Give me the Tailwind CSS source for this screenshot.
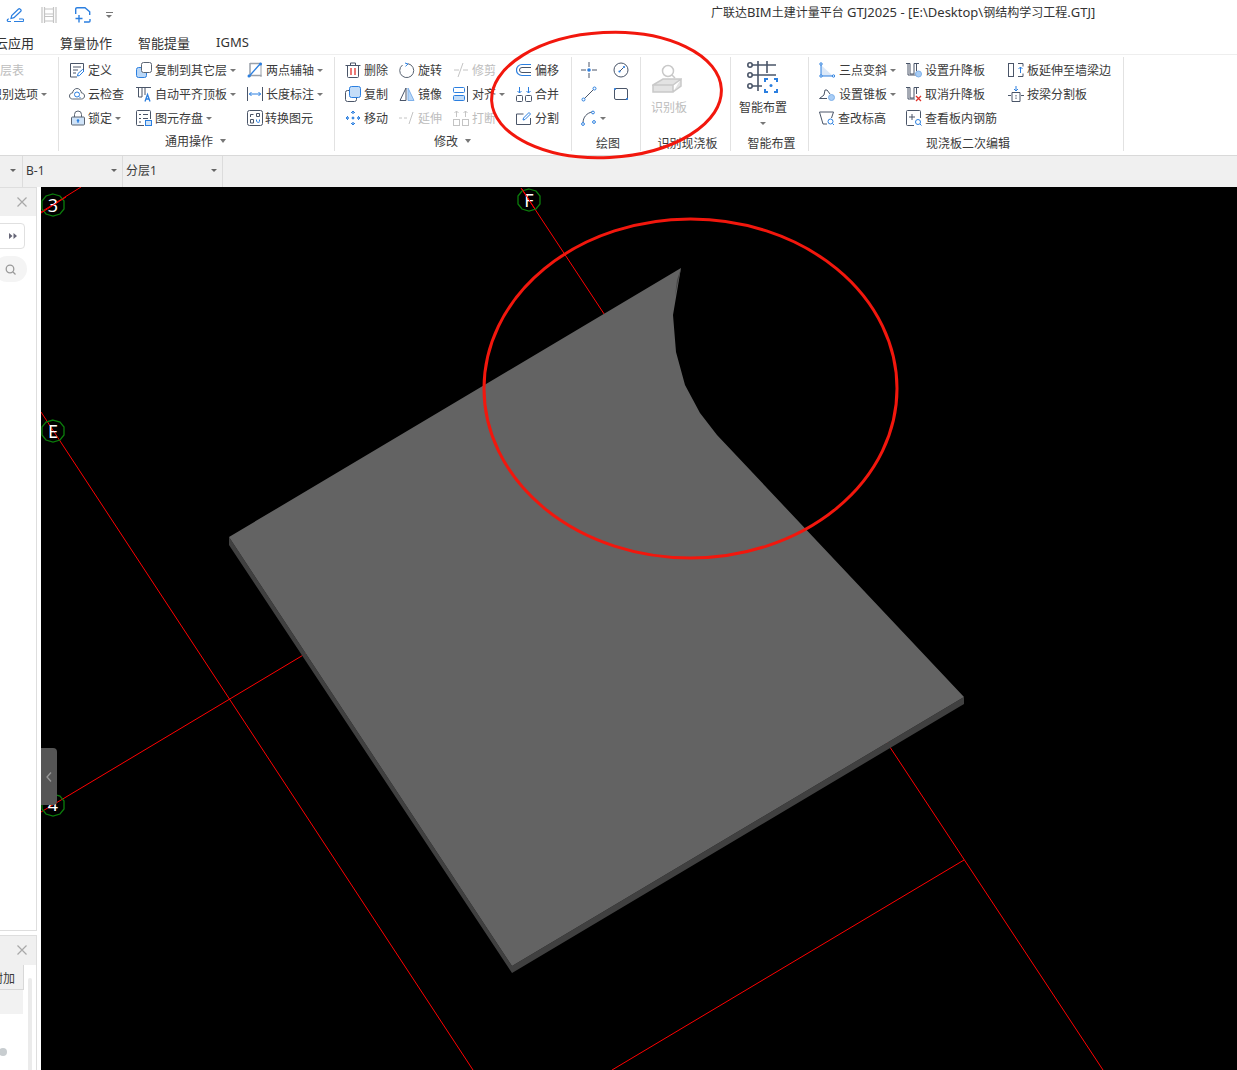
<!DOCTYPE html>
<html lang="zh">
<head>
<meta charset="utf-8">
<script src="https://cdn.jsdelivr.net/npm/@tailwindcss/browser@4"></script>
<title>GTJ2025</title>
</head>
<body class="relative w-[1237px] h-[1070px] overflow-hidden bg-white text-xs text-[#3a3a3a] font-[Noto_Sans_CJK_SC,sans-serif]">

<!-- title bar -->
<header class="relative h-[30px] flex items-center">
  <svg class="ml-[6px] w-[18px] h-[18px]" viewBox="0 0 18 18" fill="none" stroke="#2b7fe0" stroke-width="1.200"><path d="M5 15.500H2.500a1 1 0 0 1 0-2.500H3M8 15.500h8.500a1 1 0 0 0 0-2.500H13"/><path d="M5 12.500l.7-3 6.800-6.500a1 1 0 0 1 1.500 0l.8.800a1 1 0 0 1 0 1.500L8 11.700z"/></svg>
  <svg class="ml-[17px] w-[16px] h-[16px]" viewBox="0 0 16 16" fill="none" stroke="#c4c4c4" stroke-width="1.200"><path d="M1 0v16M3.500 0v16M12.500 0v16M15 0v16M3.500 2h9M3.500 7h9M3.500 9.500h9M3.500 14h9"/></svg>
  <svg class="ml-[18px] w-[16px] h-[16px]" viewBox="0 0 16 16" fill="none" stroke="#2b7fe0" stroke-width="1.400"><path d="M.7 7V2a1.300 1.300 0 0 1 1.300-1.300h8l4.700 4V8M9 15h5a1 1 0 0 0 1-1v-2M.5 11.500h7M4 8v7.500"/></svg>
  <span class="ml-[15px] flex flex-col gap-[2px]"><i class="block w-[7px] h-[1px] bg-[#777]"></i><i class="block w-0 h-0 border-x-[3.500px] border-t-[3.500px] border-x-transparent border-t-[#777]"></i></span>
  <span class="absolute left-[711px] top-[3px] leading-[18px] whitespace-nowrap text-[#333]">广联达<span class="font-[Noto_Sans,sans-serif] text-[13px]">BIM</span>土建计量平台<span class="font-[Noto_Sans,sans-serif] text-[13px]"> GTJ2025 - [E:\Desktop\</span>钢结构学习工程<span class="font-[Noto_Sans,sans-serif] text-[13px]">.GTJ]</span></span>
</header>

<!-- tabs -->
<nav class="h-[25px] pt-[2px] border-b border-[#eeeeee] flex items-center text-[13px] text-[#333] -ml-[5px] gap-[26px]">
  <span>云应用</span><span>算量协作</span><span>智能提量</span><span class="font-[Noto_Sans,sans-serif]">IGMS</span>
</nav>

<!-- ribbon -->
<section class="h-[101px] bg-white border-b border-[#d9d9d9] pt-[2px] flex items-start whitespace-nowrap">

  <div class="w-[59px] h-[94px] border-r border-[#e2e2e2] pt-[1px] overflow-hidden relative">
    <div class="h-6 flex items-center -ml-[12px] text-[#bdbdbd]">楼层表</div>
    <div class="h-6 flex items-center -ml-[10px]">识别选项<i class="ml-[3px] w-0 h-0 border-x-[3px] border-t-[3px] border-x-transparent border-t-[#777]"></i></div>
  </div>

  <!-- common -->
  <div class="w-[276px] h-[94px] border-r border-[#e2e2e2] pt-[1px] flex flex-col">
    <div class="flex pl-[10px]">
      <div class="w-[67px]">
        <div class="h-6 flex items-center gap-[3px]"><svg class="w-4 h-4" viewBox="0 0 16 16" fill="none" stroke="#4a5568"><path d="M8 15H1.500V1.500h13V8M4 5h8M4 8h5M4 11h3"/><path d="M8.500 14l.5-2.500 4.500-4 1.500 1.500-4.500 4.500z" stroke="#2b7fe0"/></svg><span>定义</span></div>
        <div class="h-6 flex items-center gap-[3px]"><svg class="w-4 h-4" viewBox="0 0 16 16" fill="none" stroke="#5a6472"><path d="M4 13H3.500C1.500 13 .5 11.500 .5 10s1-3 3-3C4 4 6 2.500 8 2.500S12 4 12.500 7c2 0 3 1.500 3 3s-1 3-3 3H4z"/><circle cx="8" cy="8.500" r="2.500" stroke="#2b7fe0"/><path d="M10 10.500l1.500 1.500" stroke="#2b7fe0"/></svg><span>云检查</span></div>
        <div class="h-6 flex items-center gap-[3px] pl-[2px]"><svg class="w-[14px] h-4" viewBox="0 0 14 16" fill="none" stroke="#5a6472"><path d="M3.500 7V4.500a3.500 3.500 0 0 1 7 0V7"/><rect x=".5" y="7" width="13" height="8" rx="1" fill="#cfe3f8"/><circle cx="7" cy="10.500" r="1.300" fill="#2b7fe0" stroke="none"/><path d="M7 11v2" stroke="#2b7fe0"/></svg><span class="flex items-center">锁定<i class="ml-[3px] w-0 h-0 border-x-[3px] border-t-[3px] border-x-transparent border-t-[#777]"></i></span></div>
      </div>
      <div class="w-[111px]">
        <div class="h-6 flex items-center gap-[3px]"><svg class="w-4 h-4" viewBox="0 0 16 16" fill="none"><rect x=".5" y="5.500" width="10" height="10" rx="2" fill="#b9d7f7" stroke="#2b7fe0"/><rect x="5.500" y=".5" width="10" height="10" rx="2" fill="#fff" stroke="#5a6472"/></svg><span class="flex items-center">复制到其它层<i class="ml-[3px] w-0 h-0 border-x-[3px] border-t-[3px] border-x-transparent border-t-[#777]"></i></span></div>
        <div class="h-6 flex items-center gap-[3px]"><svg class="w-4 h-4" viewBox="0 0 16 16" fill="none" stroke="#4a5568"><path d="M0 1.500h15M2.500 2v9h3.500V2M9 2v7"/><path d="M9 15.500l2.500-7 2.500 7M10 13h3" stroke="#2b7fe0" stroke-width="1.300"/></svg><span class="flex items-center">自动平齐顶板<i class="ml-[3px] w-0 h-0 border-x-[3px] border-t-[3px] border-x-transparent border-t-[#777]"></i></span></div>
        <div class="h-6 flex items-center gap-[3px]"><svg class="w-4 h-4" viewBox="0 0 16 16" fill="none" stroke="#4a5568"><path d="M8 15.500H1.500a1 1 0 0 1-1-1v-13a1 1 0 0 1 1-1h12a1 1 0 0 1 1 1V9"/><path d="M3 4.500h2M7 4.500h5M3 8.500h2M7 8.500h5M3 12h2"/><rect x="9.500" y="10.500" width="6" height="5" fill="#cfe3f8" stroke="#2b7fe0"/></svg><span class="flex items-center">图元存盘<i class="ml-[3px] w-0 h-0 border-x-[3px] border-t-[3px] border-x-transparent border-t-[#777]"></i></span></div>
      </div>
      <div>
        <div class="h-6 flex items-center gap-[3px]"><svg class="w-4 h-4" viewBox="0 0 16 16" fill="none"><path d="M3 1.500h11.500M3 1v14M1 13.500h13.500" stroke="#9aa1aa" stroke-width="1.500"/><path d="M14 1v14" stroke="#9aa1aa"/><path d="M2 14.500L13.500 1.500" stroke="#2b7fe0" stroke-width="1.300"/><circle cx="2" cy="14" r="1.500" fill="#2b7fe0"/><circle cx="13.500" cy="2" r="1.500" fill="#2b7fe0"/></svg><span class="flex items-center">两点辅轴<i class="ml-[3px] w-0 h-0 border-x-[3px] border-t-[3px] border-x-transparent border-t-[#777]"></i></span></div>
        <div class="h-6 flex items-center gap-[3px]"><svg class="w-4 h-4" viewBox="0 0 16 16" fill="none" stroke="#4a5568"><path d="M.5 1v14M15.500 1v14"/><path d="M2 8h12M4.500 6L2.500 8l2 2M11.500 6l2 2-2 2" stroke="#2b7fe0"/></svg><span class="flex items-center">长度标注<i class="ml-[3px] w-0 h-0 border-x-[3px] border-t-[3px] border-x-transparent border-t-[#777]"></i></span></div>
        <div class="h-6 flex items-center gap-[2px]"><svg class="w-4 h-4" viewBox="0 0 16 16" fill="none" stroke="#4a5568"><rect x=".5" y=".5" width="15" height="15" rx="2"/><path d="M3.500 7V4.500h3M3.500 9.500h3v3.500h-3zM9.500 3.500h3v3h-3z"/><path d="M9.500 9.500v1.500a2 2 0 0 0 3 1M12.500 9.500v2" stroke="#2b7fe0"/></svg><span>转换图元</span></div>
      </div>
    </div>
    <div class="h-[22px] flex items-center justify-center pr-[2px]">通用操作<i class="ml-[7px] w-0 h-0 border-x-[3.500px] border-t-[4px] border-x-transparent border-t-[#777]"></i></div>
  </div>

  <!-- modify -->
  <div class="w-[237px] h-[94px] border-r border-[#e2e2e2] pt-[1px] flex flex-col">
    <div class="flex pl-[10px]">
      <div class="w-[54px]">
        <div class="h-6 flex items-center gap-[3px]"><svg class="w-4 h-4" viewBox="0 0 16 16" fill="none" stroke="#4a5568"><path d="M.5 3.500h15M5.500 3.500V1h5v2.500M2.500 3.500v11a1 1 0 0 0 1 1h9a1 1 0 0 0 1-1v-11"/><path d="M6 6v7M10 6v7" stroke="#e0322b" stroke-width="1.300"/></svg><span>删除</span></div>
        <div class="h-6 flex items-center gap-[3px]"><svg class="w-4 h-4" viewBox="0 0 16 16" fill="none"><rect x=".5" y="4.500" width="11" height="11" rx="2" fill="#fff" stroke="#4a5568"/><rect x="4.500" y=".5" width="11" height="11" rx="2" fill="#c4ddf8" stroke="#2b7fe0"/></svg><span>复制</span></div>
        <div class="h-6 flex items-center gap-[3px]"><svg class="w-4 h-4" viewBox="0 0 16 16" fill="none" stroke="#2b7fe0"><path d="M8 1v3M8 12v3M1 8h3M12 8h3" stroke-width="1.300"/><path d="M6 3l2-2 2 2M6 13l2 2 2-2M3 6L1 8l2 2M13 6l2 2-2 2"/><circle cx="8" cy="8" r="1" fill="#2b7fe0"/></svg><span>移动</span></div>
      </div>
      <div class="w-[54px]">
        <div class="h-6 flex items-center gap-[3px]"><svg class="w-4 h-4" viewBox="0 0 16 16" fill="none" stroke="#5a6472"><path d="M9 1.700A7 7 0 1 1 3.500 3"/><path d="M6 1l3 1-2.500 2.300" stroke="#2b7fe0"/></svg><span>旋转</span></div>
        <div class="h-6 flex items-center gap-[3px]"><svg class="w-4 h-4" viewBox="0 0 16 16" fill="none"><path d="M7 2L1 14.500h6z" fill="#fff" stroke="#4a5568"/><path d="M9 2l6 12.500H9z" fill="#b9d7f7" stroke="#7fb1ea"/></svg><span>镜像</span></div>
        <div class="h-6 flex items-center gap-[3px] text-[#bdbdbd]"><svg class="w-4 h-4" viewBox="0 0 16 16" fill="none" stroke="#c4c4c4"><path d="M0 8h3M5 8h3M10 14l4-12"/></svg><span>延伸</span></div>
      </div>
      <div class="w-[63px]">
        <div class="h-6 flex items-center gap-[3px] text-[#bdbdbd]"><svg class="w-4 h-4" viewBox="0 0 16 16" fill="none" stroke="#c4c4c4"><path d="M1 8h5M10 8h5M5 15L10 1"/></svg><span>修剪</span></div>
        <div class="h-6 flex items-center gap-[3px]"><svg class="w-4 h-4" viewBox="0 0 16 16" fill="none"><rect x=".5" y="1.500" width="11" height="5" rx="1" stroke="#2b7fe0"/><rect x=".5" y="9.500" width="11" height="5" rx="1" fill="#c4ddf8" stroke="#2b7fe0"/><path d="M14.500 0v16" stroke="#4a5568"/></svg><span class="flex items-center">对齐<i class="ml-[3px] w-0 h-0 border-x-[3px] border-t-[3px] border-x-transparent border-t-[#777]"></i></span></div>
        <div class="h-6 flex items-center gap-[3px] text-[#bdbdbd]"><svg class="w-4 h-4" viewBox="0 0 16 16" fill="none" stroke="#c4c4c4"><rect x=".5" y="9.500" width="6" height="6"/><rect x="9.500" y="9.500" width="6" height="6"/><path d="M3.500 1v6M1.500 3l2-2 2 2M12.500 1v6M10.500 3l2-2 2 2"/></svg><span>打断</span></div>
      </div>
      <div>
        <div class="h-6 flex items-center gap-[3px]"><svg class="w-4 h-4" viewBox="0 0 16 16" fill="none"><path d="M15 2.500H6a5.500 5.500 0 0 0 0 11h9" stroke="#2b7fe0" stroke-width="1.200"/><path d="M15 5.500H6a2.500 2.500 0 0 0 0 5h9" stroke="#4a5568"/></svg><span>偏移</span></div>
        <div class="h-6 flex items-center gap-[3px]"><svg class="w-4 h-4" viewBox="0 0 16 16" fill="none" stroke="#4a5568"><rect x=".5" y="9.500" width="6" height="6" rx="1"/><rect x="9.500" y="9.500" width="6" height="6" rx="1"/><path d="M3.500 1v6M1.500 5l2 2 2-2M12.500 1v6M10.500 5l2 2 2-2" stroke="#2b7fe0"/></svg><span>合并</span></div>
        <div class="h-6 flex items-center gap-[3px]"><svg class="w-4 h-4" viewBox="0 0 16 16" fill="none" stroke="#4a5568"><path d="M7.500 4H.5v10.500h14V8"/><path d="M7 10l.5-2L13 2.500 14.500 4 9 9.500z" stroke="#2b7fe0"/></svg><span>分割</span></div>
      </div>
    </div>
    <div class="h-[22px] flex items-center justify-center -ml-[1px]">修改<i class="ml-[7px] w-0 h-0 border-x-[3.500px] border-t-[4px] border-x-transparent border-t-[#777]"></i></div>
  </div>

  <!-- draw -->
  <div class="w-[69px] h-[94px] border-r border-[#e2e2e2] pt-[1px] flex flex-col">
    <div class="flex pl-[9px]">
      <div class="w-[33px]">
        <div class="h-6 flex items-center"><svg class="w-4 h-4" viewBox="0 0 16 16" fill="none" stroke="#4a5568"><path d="M0 8h5M11 8h5M8 0v5M8 11v5"/><circle cx="8" cy="8" r="1.800" fill="#2b7fe0" stroke="none"/></svg></div>
        <div class="h-6 flex items-center"><svg class="w-4 h-4" viewBox="0 0 16 16" fill="none" stroke="#4a5568"><path d="M3 13L13 3"/><circle cx="2.500" cy="13.500" r="1.500" fill="#fff" stroke="#2b7fe0"/><circle cx="13.500" cy="2.500" r="1.500" fill="#fff" stroke="#2b7fe0"/></svg></div>
        <div class="h-6 flex items-center"><svg class="w-4 h-4" viewBox="0 0 16 16" fill="none" stroke="#4a5568"><path d="M2 13C2 7 6 3 11 2"/><circle cx="2" cy="14" r="1.400" fill="#fff" stroke="#2b7fe0"/><circle cx="12" cy="2.500" r="1.400" fill="#fff" stroke="#2b7fe0"/><circle cx="13" cy="12" r="1.400" fill="#fff" stroke="#2b7fe0"/></svg><i class="ml-[3px] w-0 h-0 border-x-[3px] border-t-[3px] border-x-transparent border-t-[#777]"></i></div>
      </div>
      <div class="-ml-[1px]">
        <div class="h-6 flex items-center"><svg class="w-4 h-4" viewBox="0 0 16 16" fill="none" stroke="#4a5568"><circle cx="8" cy="8" r="7"/><path d="M6.500 9.500l4-4"/><circle cx="6.500" cy="9.500" r="1.100" fill="#2b7fe0" stroke="none"/><circle cx="11" cy="5" r="1.100" fill="#2b7fe0" stroke="none"/></svg></div>
        <div class="h-6 flex items-center"><svg class="w-4 h-4" viewBox="0 0 16 16" fill="none" stroke="#4a5568"><rect x="1.500" y="2.500" width="13" height="11" rx="1.500"/><circle cx="2" cy="3" r="1.100" fill="#2b7fe0" stroke="none"/><circle cx="14" cy="13" r="1.100" fill="#2b7fe0" stroke="none"/></svg></div>
      </div>
    </div>
    <div class="h-[22px] shrink-0 mt-[2px] flex items-center justify-center pl-[4px]">绘图</div>
  </div>

  <!-- recognise -->
  <div class="w-[90px] h-[94px] border-r border-[#e2e2e2] flex flex-col">
    <div class="h-[73px] shrink-0 pl-[11px] flex flex-col items-start">
      <svg class="mt-[7px] w-[30px] h-[30px]" viewBox="0 0 30 30" fill="none" stroke="#c9c9c9" stroke-width="1.500"><circle cx="16" cy="7" r="5.500"/><path d="M20 11l3 3"/><path d="M1 21l10-6h18l-8 6zM1 21v7h20v-7M21 28l8-6v-7" fill="#e3e3e3"/></svg>
      <span class="mt-[5px] -ml-[1px] text-[#bdbdbd]">识别板</span>
    </div>
    <div class="h-[22px] shrink-0 mt-[2px] flex items-center justify-center pl-[4px]">识别现浇板</div>
  </div>

  <!-- smart -->
  <div class="w-[78px] h-[94px] border-r border-[#e2e2e2] flex flex-col">
    <div class="h-[73px] shrink-0 w-[64px] flex flex-col items-center">
      <svg class="mt-[3px] w-[32px] h-[34px] shrink-0" viewBox="0 0 32 34" fill="none" stroke="#4a5568" stroke-width="1.600"><path d="M5 5h24M5 15h24M5 26h10M11 1v30M20 1v12"/><circle cx="3" cy="5" r="2.200" fill="#fff"/><circle cx="3" cy="15" r="2.200" fill="#fff"/><circle cx="3" cy="26" r="2.200" fill="#fff"/><path d="M18 22v-3h3M27 19h3v3M30 29v3h-3M21 32h-3v-3" stroke="#2b7fe0" stroke-width="2"/><circle cx="24" cy="25.500" r="1.500" fill="#2b7fe0" stroke="none"/></svg>
      <span class="mt-[4px] leading-[18px]">智能布置</span>
      <i class="mt-[6px] w-0 h-0 border-x-[3px] border-t-[3px] border-x-transparent border-t-[#777]"></i>
    </div>
    <div class="h-[22px] shrink-0 mt-[2px] flex items-center justify-center pl-[4px]">智能布置</div>
  </div>

  <!-- slab -->
  <div class="w-[315px] h-[94px] border-r border-[#e2e2e2] pt-[1px] flex flex-col">
    <div class="flex pl-[10px]">
      <div class="w-[87px]">
        <div class="h-6 flex items-center gap-[3px]"><svg class="w-4 h-4" viewBox="0 0 16 16" fill="none"><path d="M2 3v11h12z" fill="#dbe8f8"/><path d="M2 2v12h13" stroke="#2b7fe0"/><circle cx="2" cy="2" r="1.200" fill="#fff" stroke="#2b7fe0"/><circle cx="2" cy="14" r="1.200" fill="#fff" stroke="#2b7fe0"/><circle cx="14.500" cy="14" r="1.200" fill="#fff" stroke="#2b7fe0"/></svg><span class="ml-[1px] flex items-center">三点变斜<i class="ml-[3px] w-0 h-0 border-x-[3px] border-t-[3px] border-x-transparent border-t-[#777]"></i></span></div>
        <div class="h-6 flex items-center gap-[3px]"><svg class="w-4 h-4" viewBox="0 0 16 16" fill="none" stroke="#4a5568"><path d="M8 12.500H.5L5 9l1-5h2l3 4"/><circle cx="12.500" cy="11.500" r="3" fill="#a9cdf5" stroke="#7fb1ea"/></svg><span class="ml-[1px] flex items-center">设置锥板<i class="ml-[3px] w-0 h-0 border-x-[3px] border-t-[3px] border-x-transparent border-t-[#777]"></i></span></div>
        <div class="h-6 flex items-center gap-[3px]"><svg class="w-4 h-4" viewBox="0 0 16 16" fill="none" stroke="#4a5568"><path d="M8 14H4L.5 2h14l-2 6"/><circle cx="11.500" cy="11.500" r="2.500" stroke="#2b7fe0"/><path d="M13.500 13.500l1.500 1.500" stroke="#2b7fe0"/></svg><span>查改标高</span></div>
      </div>
      <div class="w-[102px]">
        <div class="h-6 flex items-center gap-[3px]"><svg class="w-4 h-4" viewBox="0 0 16 16" fill="none" stroke="#4a5568"><path d="M0 1.500h4V12h4V1.500h5M2 1.500v11.500h8M10.500 2v7"/><circle cx="12.500" cy="12" r="3" fill="#a9cdf5" stroke="#7fb1ea"/></svg><span>设置升降板</span></div>
        <div class="h-6 flex items-center gap-[3px]"><svg class="w-4 h-4" viewBox="0 0 16 16" fill="none" stroke="#4a5568"><path d="M0 1.500h4V12h4V1.500h5M2 1.500v11.500h7M10.500 2v6"/><path d="M10 10l5 5M15 10l-5 5" stroke="#e0322b" stroke-width="1.300"/></svg><span>取消升降板</span></div>
        <div class="h-6 flex items-center gap-[3px]"><svg class="w-4 h-4" viewBox="0 0 16 16" fill="none" stroke="#4a5568"><path d="M8 15.500H1.500a1 1 0 0 1-1-1v-13a1 1 0 0 1 1-1h12a1 1 0 0 1 1 1V8"/><path d="M3 7h6M6 4v6"/><circle cx="12" cy="12" r="2.500" stroke="#2b7fe0"/><path d="M14 14l1.500 1.500" stroke="#2b7fe0"/></svg><span>查看板内钢筋</span></div>
      </div>
      <div>
        <div class="h-6 flex items-center gap-[3px]"><svg class="w-4 h-4" viewBox="0 0 16 16" fill="none" stroke="#4a5568"><path d="M.5 1v14M5.500 1v14M.5 1.500h5M.5 14.500h5"/><path d="M10 1.500h5v3M10 14.500h5v-3"/><path d="M12.500 11V5M10.500 7l2-2 2 2" stroke="#2b7fe0"/></svg><span>板延伸至墙梁边</span></div>
        <div class="h-6 flex items-center gap-[3px]"><svg class="w-4 h-4" viewBox="0 0 16 16" fill="none" stroke="#4a5568"><path d="M0 9.500h3M13 9.500h3"/><path d="M4 6.500h8v9H4z"/><path d="M8 9v4" stroke-dasharray="1.500 1"/><path d="M8 0v5M6 3l2 2 2-2" stroke="#2b7fe0"/></svg><span>按梁分割板</span></div>
      </div>
    </div>
    <div class="h-[22px] shrink-0 mt-[2px] flex items-center justify-center pl-[4px]">现浇板二次编辑</div>
  </div>
</section>

<!-- sub bar -->
<div class="h-[31px] pb-[2px] bg-[#f0f0f0] relative flex items-stretch text-[#3a3a3a]">
  <div class="w-[23px] -mb-[2px] pb-[2px] border-r border-[#dcdcdc] flex items-center justify-end pr-[6px]"><i class="w-0 h-0 border-x-[3px] border-t-[3px] border-x-transparent border-t-[#666]"></i></div>
  <div class="w-[100px] -mb-[2px] pb-[2px] border-r border-[#dcdcdc] flex items-center justify-between pl-[3px] pr-[5px]"><span class="font-[Noto_Sans,sans-serif]">B-1</span><i class="w-0 h-0 border-x-[3px] border-t-[3px] border-x-transparent border-t-[#666]"></i></div>
  <div class="w-[100px] -mb-[2px] pb-[2px] border-r border-[#dcdcdc] flex items-center justify-between pl-[3px] pr-[5px]"><span>分层<span class="font-[Noto_Sans,sans-serif]">1</span></span><i class="w-0 h-0 border-x-[3px] border-t-[3px] border-x-transparent border-t-[#666]"></i></div>
</div>

<!-- main -->
<main class="flex h-[883px]">
  <aside class="w-[41px] shrink-0 bg-white overflow-hidden flex flex-col">
    <div class="w-[37px] h-[744px] border-t border-r border-b border-[#dedede]">
      <div class="h-[28px] bg-[#f0f0f0] flex items-center justify-end pr-[9px]">
        <svg class="w-[10px] h-[10px]" viewBox="0 0 10 10" stroke="#a8a8a8" stroke-width="1.200"><path d="M.5 .5l9 9M9.500 .5l-9 9"/></svg>
      </div>
      <div class="-ml-[6px] mt-[7px] w-[31px] h-[26px] rounded-[4px] border border-[#e0e0e0] flex items-center justify-end pr-[7px]">
        <svg class="w-[8px] h-[6px]" viewBox="0 0 8 6" fill="#667"><path d="M0 0l3.500 3L0 6zM4.500 0L8 3 4.500 6z"/></svg>
      </div>
      <div class="-ml-[6px] mt-[7px] w-[33px] h-[26px] rounded-full bg-[#f4f4f4] flex items-center justify-end pr-[11px]">
        <svg class="w-[11px] h-[11px]" viewBox="0 0 11 11" fill="none" stroke="#999" stroke-width="1.300"><circle cx="5" cy="5" r="3.800"/><path d="M8 8l2.500 2.500"/></svg>
      </div>
    </div>
    <div class="w-[37px] mt-[4px] flex-1 border-t border-r border-[#dedede] relative">
      <div class="h-[29px] bg-[#f0f0f0] flex items-center justify-end pr-[9px] pb-[2px]">
        <svg class="w-[10px] h-[10px]" viewBox="0 0 10 10" stroke="#a8a8a8" stroke-width="1.200"><path d="M.5 .5l9 9M9.500 .5l-9 9"/></svg>
      </div>
      <div class="w-[24px] h-[25px] pt-[1px] bg-[#f0f0f0] border-r border-b border-[#d8d8d8] flex items-center justify-end pr-[8px] overflow-hidden whitespace-nowrap">附加</div>
      <div class="w-[23px] h-[24px] bg-[#f2f2f2]"></div>
      <div class="absolute left-[28px] top-[42px] bottom-0 w-[4px] bg-[#ebebeb] rounded-t"></div>
      <div class="absolute -left-[1px] top-[112px] w-[8px] h-[8px] rounded-full bg-[#c8cdd0]"></div>
    </div>
  </aside>

  <div class="relative flex-1 bg-black overflow-hidden">
    <svg class="block w-[1196px] h-[883px]" viewBox="41 187 1196 883" fill="none">
      <g stroke="#ff0000" stroke-width="1">
        <path d="M41 412L473 1070"/>
        <path d="M521 188L1103 1070"/>
        <path d="M41 212L81 187"/>
        <path d="M41 812L320 645"/>
        <path d="M964 860L612 1070"/>
      </g>
      <path d="M229 537V545L512 973L964 704V697L512 966z" fill="#404040"/>
      <path d="M229 537L681 268L673 315L676 352L685 385L700 413L717 435L964 697L512 966z" fill="#636363"/>
      <path d="M681 268L677 280L675 296z" fill="#454545"/>
      <g stroke="#0b7d0b" stroke-width="1.300" fill="none">
        <polygon points="53,194 60,196 64,201 64,209 60,214 53,216 46,214 42,209 42,201 46,196"/>
        <polygon points="529,189 536,191 540,196 540,204 536,209 529,211 522,209 518,204 518,196 522,191"/>
        <polygon points="53,420 60,422 64,427 64,435 60,440 53,442 46,440 42,435 42,427 46,422"/>
        <polygon points="53,794 60,796 64,801 64,809 60,814 53,816 46,814 42,809 42,801 46,796"/>
      </g>
      <g fill="#fff" font-size="18" text-anchor="middle" font-family="Noto Sans, sans-serif">
        <text x="53" y="212">3</text>
        <text x="529" y="207">F</text>
        <text x="53" y="438">E</text>
        <text x="53" y="811">4</text>
      </g>
      <path d="M522 189L535 209" stroke="#ff0000" stroke-width="1"/>
      <path d="M41 213L66 197" stroke="#ff0000" stroke-width="1"/>
    </svg>
    <button class="absolute left-0 top-[561px] w-[16px] h-[57px] bg-[#555] rounded-tr-[4px] rounded-br-[4px] flex items-center justify-center">
      <svg class="w-[6px] h-[10px]" viewBox="0 0 6 10" fill="none" stroke="#999" stroke-width="1.300"><path d="M5 .5L1 5l4 4.500"/></svg>
    </button>
  </div>
</main>

<!-- hand-drawn annotations over the screenshot -->
<svg class="absolute left-0 top-0 w-[1237px] h-[1070px] pointer-events-none" viewBox="0 0 1237 1070" fill="none" stroke="#f2170d" stroke-width="3">
  <ellipse cx="606.500" cy="95" rx="115" ry="62.500" transform="rotate(-3 606.500 95)"/>
  <ellipse cx="690.500" cy="388.500" rx="206.500" ry="169.500"/>
</svg>
</body>
</html>
